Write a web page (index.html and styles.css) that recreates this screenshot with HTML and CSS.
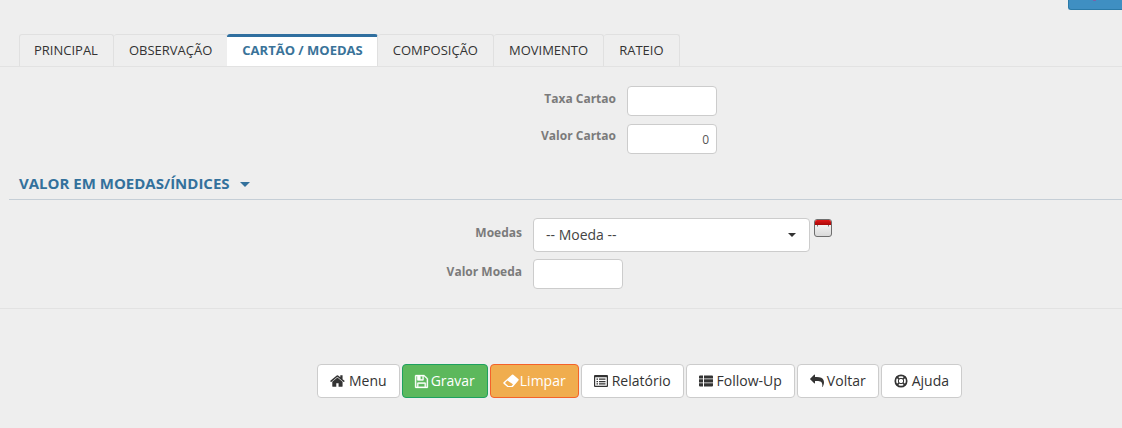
FILE: index.html
```html
<!DOCTYPE html>
<html lang="pt">
<head>
<meta charset="utf-8">
<title>Cartão / Moedas</title>
<link rel="stylesheet" href="styles.css">
</head>
<body>
<div class="topbar"><button class="top-btn" type="button"><i class="top-glyph"></i></button></div>
<nav class="tabs">
  <a class="tab">PRINCIPAL</a>
  <a class="tab">OBSERVAÇÃO</a>
  <a class="tab active">CARTÃO / MOEDAS</a>
  <a class="tab">COMPOSIÇÃO</a>
  <a class="tab">MOVIMENTO</a>
  <a class="tab">RATEIO</a>
</nav>
<section class="form-a">
  <div class="row"><label class="lbl">Taxa Cartao</label><input class="inp" type="text"></div>
  <div class="row"><label class="lbl lbl-up">Valor Cartao</label><input class="inp num" type="text" value="0"></div>
</section>
<h3 class="section-title">VALOR EM MOEDAS/ÍNDICES <span class="caret"></span></h3>
<section class="form-b">
  <div class="row row-select">
    <label class="lbl lbl-down">Moedas</label>
    <div class="select"><span>-- Moeda --</span><i class="sel-caret"></i></div>
    <svg class="cal" width="19" height="19" viewBox="0 0 19 19">
      <defs>
        <linearGradient id="calb" x1="0" y1="0" x2="0" y2="1"><stop offset="0" stop-color="#ffffff"/><stop offset="1" stop-color="#d8d8d8"/></linearGradient>
        <linearGradient id="calr" x1="0" y1="0" x2="0" y2="1"><stop offset="0" stop-color="#e01818"/><stop offset="1" stop-color="#a80808"/></linearGradient>
      </defs>
      <rect x="0.5" y="0.5" width="17" height="17" rx="2.5" fill="url(#calb)" stroke="#6e6e6e"/>
      <path d="M1 6V3a2 2 0 0 1 2-2h12a2 2 0 0 1 2 2v3z" fill="url(#calr)"/>
      <path d="M3.500 6v1.500M14.500 6v1.500" stroke="#777" stroke-width="1"/>
    </svg>
  </div>
  <div class="row"><label class="lbl">Valor Moeda</label><input class="inp" type="text"></div>
</section>
<hr class="divider">
<div class="actions">
  <button class="btn" type="button"><svg class="ic ic-home" viewBox="0 0 1792 1792"><path d="M1408 992v480q0 26-19 45t-45 19h-384v-384h-256v384h-384q-26 0-45-19t-19-45v-480q0-1 .5-3t.5-3l575-474 575 474q1 2 1 6zm223-69l-62 74q-8 9-21 11h-3q-13 0-21-7l-692-577-692 577q-12 8-24 7-13-2-21-11l-62-74q-8-10-7-23.500t11-21.500l719-599q32-26 76-26t76 26l244 204v-195q0-14 9-23t23-9h192q14 0 23 9t9 23v408l219 182q10 8 11 21.500t-7 23.500z"/></svg><span class="txt">Menu</span></button>
  <button class="btn green" type="button"><svg class="ic ic-save" viewBox="0 0 1792 1792"><path d="M512 1536h768v-384h-768v384zm896 0h128v-896q0-14-10-38.500t-20-34.500l-281-281q-10-10-34-20t-39-10v416q0 40-28 68t-68 28h-576q-40 0-68-28t-28-68v-416h-128v1280h128v-416q0-40 28-68t68-28h832q40 0 68 28t28 68v416zm-384-928v-320q0-13-9.500-22.500t-22.500-9.500h-192q-13 0-22.500 9.500t-9.500 22.500v320q0 13 9.500 22.500t22.500 9.500h192q13 0 22.500-9.500t9.500-22.500zm640 32v928q0 40-28 68t-68 28h-1344q-40 0-68-28t-28-68v-1344q0-40 28-68t68-28h928q40 0 88 20t76 48l280 280q28 28 48 76t20 88z"/></svg><span class="txt">Gravar</span></button>
  <button class="btn orange" type="button"><svg class="ic ic-eraser" viewBox="0 0 16 14"><path fill-rule="evenodd" d="M9 .8a1 1 0 0 1 1.300 0l5 4.200a1 1 0 0 1 .1 1.400L10 12.700a1 1 0 0 1-.8.400H4.800a1 1 0 0 1-.7-.3L.6 9.700a1 1 0 0 1 0-1.400zM4.300 6.500 2 9l3.300 2.900h3.200l1.500-1.700z"/></svg><span class="txt">Limpar</span></button>
  <button class="btn" type="button"><svg class="ic" viewBox="0 0 14 14"><path fill-rule="evenodd" d="M1 1h12a1 1 0 0 1 1 1v10a1 1 0 0 1-1 1H1a1 1 0 0 1-1-1V2a1 1 0 0 1 1-1zM1.200 3.200v8.600h11.600V3.200zM2.500 4.500h1.500v1.300H2.500zM5 4.500h6.500v1.300H5zM2.500 6.900h1.500v1.300H2.500zM5 6.900h6.500v1.300H5zM2.500 9.300h1.500v1.300H2.500zM5 9.300h6.500v1.300H5z"/></svg><span class="txt">Relatório</span></button>
  <button class="btn" type="button"><svg class="ic" viewBox="0 0 14 14"><path d="M0 2.500a1 1 0 0 1 1-1h3v3H0zM5 1.500h8a1 1 0 0 1 1 1v2H5zM0 5.200h4v3.300H0zM5 5.200h9v3.300H5zM0 9.200h4v3.300H1a1 1 0 0 1-1-1zM5 9.200h9v2.300a1 1 0 0 1-1 1H5z"/></svg><span class="txt">Follow-Up</span></button>
  <button class="btn btn-tight" type="button"><svg class="ic" viewBox="0 0 1792 1792"><path d="M1792 1120q0 166-127 451-3 7-10.500 24t-13.500 30-13 22q-12 17-28 17-15 0-23.500-10t-8.500-25q0-9 2.500-26.500t2.500-23.500q5-68 5-123 0-101-17.500-181t-48.500-138.500-80-101-105.500-69.500-133-42.500-154-21.500-175.500-6h-224v256q0 26-19 45t-45 19-45-19l-512-512q-19-19-19-45t19-45l512-512q19-19 45-19t45 19 19 45v256h224q713 0 875 403 53 134 53 333z"/></svg><span class="txt">Voltar</span></button>
  <button class="btn" type="button"><svg class="ic" viewBox="0 0 14 14"><circle class="ring" cx="7" cy="7" r="5.700"/><circle class="ring-thin" cx="7" cy="7" r="2.700"/><path class="ring-spoke" d="M2.700 2.700l2.400 2.400M11.300 2.700 8.900 5.100M2.700 11.300l2.400-2.400M11.300 11.300 8.900 8.900"/></svg><span class="txt">Ajuda</span></button>
</div>
</body>
</html>
```
FILE: styles.css
```css
* { box-sizing: border-box; }
html, body { margin: 0; padding: 0; }
body {
  width: 1122px;
  height: 428px;
  overflow: hidden;
  background: #eeeeee;
  font-family: "Open Sans", sans-serif;
  font-size: 14px;
  color: #333;
}
.topbar { height: 34px; display: flex; justify-content: flex-end; align-items: flex-start; }
.top-btn {
  display: flex;
  justify-content: center;
  width: 54px;
  height: 10px;
  padding: 0 2px 0 0;
  background: #3f8fc2;
  border: 0;
  border-bottom: 1px solid #2b7aa8;
  border-left: 1px solid #2b7aa8;
  border-radius: 0 0 0 3px;
}
.top-glyph { width: 3px; height: 1px; background: #7a62a8; }
.tabs {
  display: flex;
  height: 33px;
  padding-left: 19px;
  border-bottom: 1px solid #e2e2e2;
}
.tab {
  height: 32px;
  padding: 5px 15px 0 15px;
  line-height: 20px;
  font-size: 13px;
  color: #333;
  border: 1px solid #e0e0e0;
  border-bottom: 0;
  border-left: 0;
  border-radius: 3px 3px 0 0;
}
.tab:first-child { border-left: 1px solid #e0e0e0; padding-left: 14px; }
.tab.active {
  background: #fff;
  border-top: 3px solid #2f6f9f;
  border-left: 0;
  margin-left: -1px;
  height: 32px;
  padding: 3px 14px 0 15px;
  font-weight: 700;
  color: #3a7399;
}
.form-a { padding-top: 19px; }
.form-a .row { margin-left: 0; padding-left: 627px; }
.row {
  position: relative;
  display: flex;
  align-items: flex-start;
  margin-bottom: 8px;
}
.lbl {
  font-size: 12px;
  font-weight: 700;
  line-height: 16px;
  color: #7b7b7b;
  text-align: right;
}
.form-a .lbl { width: 116px; margin-left: -127px; margin-right: 11px; padding-top: 5px; }
.form-b .lbl { width: 122px; margin-left: -133px; margin-right: 11px; padding-top: 5px; }
.form-a .lbl-up { padding-top: 4px; }
.form-b .lbl-down { padding-top: 7px; }
.inp {
  width: 90px;
  height: 30px;
  padding: 0 7px;
  background: #fff;
  border: 1px solid #cccccc;
  border-radius: 4px;
  font-family: inherit;
  font-size: 12px;
  color: #555;
}
.num { text-align: right; }
.section-title {
  margin: 14px 0 0 9px;
  height: 32px;
  padding: 5px 0 0 10px;
  font-size: 15px;
  line-height: 20px;
  font-weight: 700;
  color: #33719c;
  border-bottom: 1px solid #c5ced6;
}
.caret {
  display: inline-block;
  margin-left: 6px;
  vertical-align: middle;
  width: 0;
  height: 0;
  border-left: 5px solid transparent;
  border-right: 5px solid transparent;
  border-top: 5px solid #33719c;
}
.form-b { padding-top: 18px; padding-left: 533px; }
.row-select { margin-bottom: 7px; }
.select {
  position: relative;
  width: 277px;
  height: 34px;
  padding: 6px 12px;
  line-height: 20px;
  font-size: 14px;
  color: #444;
  background: #fff;
  border: 1px solid #cccccc;
  border-radius: 4px;
}
.sel-caret {
  position: absolute;
  right: 13px;
  top: 14px;
  width: 0;
  height: 0;
  border-left: 4px solid transparent;
  border-right: 4px solid transparent;
  border-top: 4px solid #333;
}
.cal { margin: 1px 0 0 4px; flex: none; }
.divider {
  margin: 19px 0 0;
  height: 0;
  border: 0;
  border-top: 1px solid #e2e2e2;
}
.actions {
  display: flex;
  gap: 2px;
  padding: 55px 0 0 317px;
}
.btn {
  display: flex;
  align-items: center;
  height: 34px;
  padding: 0 12px;
  background: #fff;
  border: 1px solid #cccccc;
  border-radius: 4px;
  font-family: inherit;
  font-size: 14px;
  color: #333;
  white-space: nowrap;
}
.txt { position: relative; top: -1px; }
.btn.green { background: #5cb85c; border-color: #1ea05f; color: #fff; }
.btn.orange { background: #f0ad4e; border-color: #f4622a; color: #fff; }
.ic { width: 14px; height: 14px; margin-right: 4px; flex: none; fill: currentColor; }
.ic-home { width: 16px; height: 16px; margin-right: 3px; }
.ic-save { width: 15px; height: 15px; margin-right: 2px; margin-left: -1px; stroke: currentColor; stroke-width: 40; }
.ic-eraser { width: 16px; height: 14px; margin-right: 1px; }
.btn-tight .ic { margin-right: 3px; }
.ring { fill: none; stroke: currentColor; stroke-width: 1.700; }
.ring-thin { fill: none; stroke: currentColor; stroke-width: 1; }
.ring-spoke { fill: none; stroke: currentColor; stroke-width: 1.700; }
```
